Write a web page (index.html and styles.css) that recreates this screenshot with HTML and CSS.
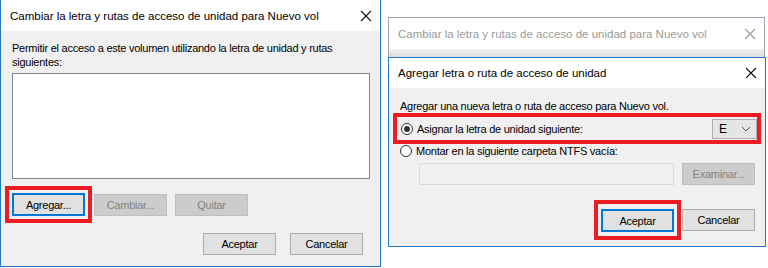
FILE: index.html
```html
<!DOCTYPE html>
<html lang="es">
<head>
    <meta charset="UTF-8">
    <title>Letra de unidad</title>
    <link rel="stylesheet" href="styles.css">
</head>
<body>
    <div class="desk">
        <div class="dialog main">
            <div class="titlebar">
                <span class="title">Cambiar la letra y rutas de acceso de unidad para Nuevo vol</span>
                <svg class="close" width="12" height="12" viewBox="0 0 12 12"><path d="M1 1L11 11M11 1L1 11" stroke="currentColor" stroke-width="1.1"/></svg>
            </div>
            <div class="body">
                <p class="lead">Permitir el acceso a este volumen utilizando la letra de unidad y rutas<br>siguientes:</p>
                <div class="listbox"></div>
                <div class="actions">
                    <span class="mark"><button class="btn focus">Agregar...</button></span>
                    <button class="btn" disabled>Cambiar...</button>
                    <button class="btn" disabled>Quitar</button>
                </div>
                <div class="footer">
                    <button class="btn">Aceptar</button>
                    <button class="btn">Cancelar</button>
                </div>
            </div>
        </div>

        <div class="dialog back">
            <div class="titlebar inactive">
                <span class="title">Cambiar la letra y rutas de acceso de unidad para Nuevo vol</span>
                <svg class="close" width="12" height="12" viewBox="0 0 12 12"><path d="M1 1L11 11M11 1L1 11" stroke="currentColor" stroke-width="1.1"/></svg>
            </div>
            <div class="shade"></div>

            <div class="dialog front">
                <div class="titlebar">
                    <span class="title">Agregar letra o ruta de acceso de unidad</span>
                    <svg class="close" width="12" height="12" viewBox="0 0 12 12"><path d="M1 1L11 11M11 1L1 11" stroke="currentColor" stroke-width="1.1"/></svg>
                </div>
                <div class="body">
                    <p class="intro">Agregar una nueva letra o ruta de acceso para Nuevo vol.</p>
                    <div class="pick">
                        <label class="option">
                            <span class="radio checked"></span>
                            Asignar la letra de unidad siguiente:
                        </label>
                        <div class="combo">
                            <span>E</span>
                            <svg width="10" height="6" viewBox="0 0 10 6"><path d="M1 1L5 5L9 1" fill="none" stroke="#555" stroke-width="1"/></svg>
                        </div>
                    </div>
                    <label class="option second">
                        <span class="radio"></span>
                        Montar en la siguiente carpeta NTFS vacía:
                    </label>
                    <div class="folder">
                        <div class="textbox"></div>
                        <button class="btn" disabled>Examinar...</button>
                    </div>
                    <div class="footer">
                        <span class="mark tall"><button class="btn focus">Aceptar</button></span>
                        <button class="btn">Cancelar</button>
                    </div>
                </div>
            </div>
        </div>
    </div>
</body>
</html>
```

FILE: styles.css
```css
body {
    margin: 0;
    background-color: #fff;
    font-family: "Liberation Sans", Arial, sans-serif;
    font-size: 11px;
    letter-spacing: -0.25px;
    color: #000;
}

.desk {
    display: flex;
    align-items: flex-start;
    gap: 7px;
    width: 768px;
    height: 268px;
}

.dialog {
    border: 1px solid #1f78c8;
    border-top: none;
    background-color: #f0f0f0;
    box-sizing: border-box;
}

.main {
    width: 381px;
    height: 267px;
}

.titlebar {
    display: flex;
    align-items: center;
    justify-content: space-between;
    height: 31px;
    padding: 0 8px 0 9px;
    background-color: #fff;
    font-size: 11.5px;
    letter-spacing: 0;
}

.title {
    white-space: nowrap;
}

.close {
    color: #111;
}

.body {
    padding: 0 10px 0 11px;
}

.lead {
    margin: 10px 0 0;
    line-height: 14px;
}

.listbox {
    height: 106px;
    margin-top: 4px;
    background-color: #fff;
    border: 1px solid #828790;
    box-sizing: border-box;
}

.actions {
    display: flex;
    align-items: center;
    margin-top: 7px;
}

.mark {
    display: inline-flex;
    padding: 3px;
    border: 4px solid #ed1c24;
    margin-left: -7px;
}

.actions .mark + .btn {
    margin-left: 2px;
}

.actions .btn + .btn {
    margin-left: 8px;
}

.btn {
    width: 73px;
    height: 22px;
    padding: 0;
    font-family: inherit;
    font-size: 11px;
    letter-spacing: -0.25px;
    color: #000;
    background-color: #e1e1e1;
    border: 1px solid #adadad;
    box-sizing: border-box;
}

.btn.focus {
    height: 23px;
    border: 2px solid #0078d7;
}

.btn:disabled {
    color: #838383;
    background-color: #cccccc;
    border-color: #bfbfbf;
}

.main .footer {
    display: flex;
    justify-content: flex-end;
    gap: 14px;
    margin-top: 10px;
    padding-right: 7px;
}

/* second window, behind the active one */
.back {
    width: 377px;
    margin-top: 17px;
    border-top: 1px solid #9aa4b0;
    border-color: #9aa4b0;
    border-bottom: none;
    background-color: transparent;
}

.titlebar.inactive {
    height: 31px;
    color: #9a9a9a;
}

.titlebar.inactive .close {
    color: #9a9a9a;
}

.shade {
    height: 8px;
    background: linear-gradient(#f0f0f0, #dcdcdc);
}

.front {
    width: 378px;
    margin-left: -1px;
    height: 190px;
    border-top: 1px solid #1f78c8;
}

.front .titlebar {
    height: 30px;
}

.intro {
    margin: 12px 0 0;
}

.pick {
    display: flex;
    align-items: center;
    justify-content: space-between;
    height: 23px;
    margin: 1px -6px 0 -7px;
    padding: 0 0 0 4px;
    border: 4px solid #ed1c24;
}

.option {
    display: flex;
    align-items: center;
    gap: 4px;
}

.option.second {
    margin-top: 1px;
}

.radio {
    width: 12px;
    height: 12px;
    border: 1px solid #333;
    border-radius: 50%;
    background-color: #fff;
    box-sizing: border-box;
    display: flex;
    align-items: center;
    justify-content: center;
}

.radio.checked::after {
    content: "";
    width: 6px;
    height: 6px;
    border-radius: 50%;
    background-color: #333;
}

.combo {
    display: flex;
    align-items: center;
    justify-content: space-between;
    width: 45px;
    height: 20px;
    padding: 0 5px 0 6px;
    background-color: #e5e5e5;
    border: 1px solid #acacac;
    box-sizing: border-box;
    font-size: 12px;
}

.folder {
    display: flex;
    gap: 8px;
    margin: 6px 0 0 19px;
}

.textbox {
    width: 257px;
    height: 22px;
    border: 1px solid #d9d9d9;
    background-color: #f0f0f0;
    box-sizing: border-box;
}

.front .footer {
    display: flex;
    justify-content: flex-end;
    align-items: center;
    gap: 1px;
    margin-top: 15px;
}

.mark.tall {
    margin-left: 0;
    padding: 5px 3px 4px;
}
```
